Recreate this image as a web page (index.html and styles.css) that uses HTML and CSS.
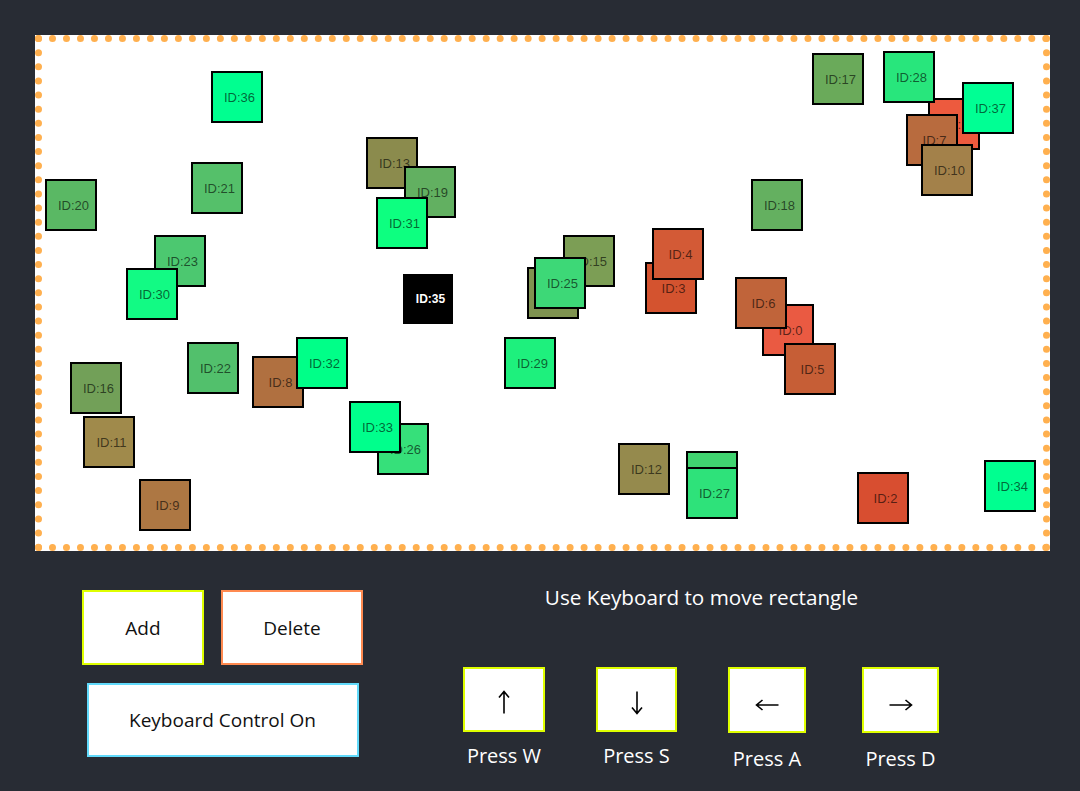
FILE: index.html
```html
<!DOCTYPE html>
<html lang="en">
<head>
<meta charset="utf-8">
<title>Rectangles</title>
<link rel="stylesheet" href="styles.css">
</head>
<body>
<div class="app">
  <div class="board">
    <div class="rect" style="left:720px;top:262px;background:#ea5a42">ID:0</div>
    <div class="rect" style="left:886px;top:56px;background:#ed5a3e">ID:1</div>
    <div class="rect" style="left:815px;top:430px;background:#d84e30">ID:2</div>
    <div class="rect" style="left:603px;top:220px;background:#d4532f">ID:3</div>
    <div class="rect" style="left:610px;top:186px;background:#d35a36">ID:4</div>
    <div class="rect" style="left:742px;top:301px;background:#c65e36">ID:5</div>
    <div class="rect" style="left:693px;top:235px;background:#c0643a">ID:6</div>
    <div class="rect" style="left:864px;top:72px;background:#b86b3e">ID:7</div>
    <div class="rect" style="left:210px;top:314px;background:#b07040">ID:8</div>
    <div class="rect" style="left:97px;top:437px;background:#ad7743">ID:9</div>
    <div class="rect" style="left:879px;top:102px;background:#a3814a">ID:10</div>
    <div class="rect" style="left:41px;top:374px;background:#a08a4b">ID:11</div>
    <div class="rect" style="left:576px;top:401px;background:#958a4d">ID:12</div>
    <div class="rect" style="left:324px;top:95px;background:#8b8b4d">ID:13</div>
    <div class="rect" style="left:485px;top:225px;background:#7f9350">ID:14</div>
    <div class="rect" style="left:521px;top:193px;background:#7c9e55">ID:15</div>
    <div class="rect" style="left:28px;top:320px;background:#72a058">ID:16</div>
    <div class="rect" style="left:770px;top:11px;background:#6aaa5a">ID:17</div>
    <div class="rect" style="left:709px;top:137px;background:#64b060">ID:18</div>
    <div class="rect" style="left:362px;top:124px;background:#62b061">ID:19</div>
    <div class="rect" style="left:3px;top:137px;background:#5ab864">ID:20</div>
    <div class="rect" style="left:149px;top:120px;background:#55c06a">ID:21</div>
    <div class="rect" style="left:145px;top:300px;background:#52c06c">ID:22</div>
    <div class="rect" style="left:112px;top:193px;background:#4cc870">ID:23</div>
    <div class="rect" style="left:644px;top:409px;background:#40d470">ID:24</div>
    <div class="rect" style="left:492px;top:215px;background:#3dd877">ID:25</div>
    <div class="rect" style="left:335px;top:381px;background:#36e07a">ID:26</div>
    <div class="rect" style="left:644px;top:425px;background:#2ee27a">ID:27</div>
    <div class="rect" style="left:841px;top:9px;background:#28e67c">ID:28</div>
    <div class="rect" style="left:462px;top:295px;background:#1ef07d">ID:29</div>
    <div class="rect" style="left:84px;top:226px;background:#12fa84">ID:30</div>
    <div class="rect" style="left:334px;top:155px;background:#0dff80">ID:31</div>
    <div class="rect" style="left:254px;top:295px;background:#00ff88">ID:32</div>
    <div class="rect" style="left:307px;top:359px;background:#00ff8c">ID:33</div>
    <div class="rect" style="left:942px;top:418px;background:#00ff90">ID:34</div>
    <div class="rect rect--selected" style="left:361px;top:232px">ID:35</div>
    <div class="rect" style="left:169px;top:29px;background:#00ff90">ID:36</div>
    <div class="rect" style="left:920px;top:40px;background:#00ff94">ID:37</div>
  </div>

  <div class="controls">
    <div class="actions">
      <div class="action-row">
        <button class="btn btn-add">Add</button>
        <button class="btn btn-delete">Delete</button>
      </div>
      <button class="btn btn-toggle">Keyboard Control On</button>
    </div>

    <div class="keyboard">
      <p class="hint">Use Keyboard to move rectangle</p>
      <div class="keys">
        <div class="key">
          <button class="key-btn key-btn--w" aria-label="Up">
            <svg class="arrow-v" width="12" height="24" viewBox="0 0 12 24"><path d="M6 1.5V23.5M1 7.5L6 1.5L11 7.5" fill="none" stroke="#000" stroke-width="1.6"/></svg>
          </button>
          <span class="key-label">Press W</span>
        </div>
        <div class="key">
          <button class="key-btn key-btn--s" aria-label="Down">
            <svg class="arrow-v" width="12" height="24" viewBox="0 0 12 24"><path d="M6 0.5V22.5M1 16.5L6 22.5L11 16.5" fill="none" stroke="#000" stroke-width="1.6"/></svg>
          </button>
          <span class="key-label">Press S</span>
        </div>
        <div class="key key--h">
          <button class="key-btn key-btn--a" aria-label="Left">
            <svg class="arrow-h" width="24" height="12" viewBox="0 0 24 12"><path d="M1.5 6H23.5M7.5 1L1.5 6L7.5 11" fill="none" stroke="#000" stroke-width="1.6"/></svg>
          </button>
          <span class="key-label">Press A</span>
        </div>
        <div class="key key--h key--last">
          <button class="key-btn key-btn--d" aria-label="Right">
            <svg class="arrow-h" width="24" height="12" viewBox="0 0 24 12"><path d="M0.5 6H22.5M16.5 1L22.5 6L16.5 11" fill="none" stroke="#000" stroke-width="1.6"/></svg>
          </button>
          <span class="key-label">Press D</span>
        </div>
      </div>
    </div>
  </div>
</div>
</body>
</html>
```

FILE: styles.css
```css
* {
  box-sizing: border-box;
}

html, body {
  margin: 0;
  padding: 0;
}

body {
  background: #282c34;
  font-family: "Open Sans", "Noto Sans", sans-serif;
  color: #fff;
  width: 1080px;
  height: 791px;
  overflow: hidden;
}

.app {
  padding-top: 35px;
}

.board {
  position: relative;
  margin-left: 35px;
  width: 1015px;
  height: 516px;
  border: 7px dotted #ffb04f;
  background: #fff;
}

.rect {
  position: absolute;
  width: 52px;
  height: 52px;
  border: 2px solid #000;
  display: flex;
  align-items: center;
  justify-content: center;
  padding-left: 5px;
  font-family: "Liberation Sans", Arial, sans-serif;
  font-size: 13px;
  color: rgba(0, 0, 0, 0.62);
  white-space: nowrap;
  overflow: hidden;
}

.rect--selected {
  width: 50px;
  height: 50px;
  border: none;
  background: #000;
  color: #fff;
  font-weight: bold;
  font-size: 12px;
}

.controls {
  display: flex;
  align-items: flex-start;
  padding-top: 34px;
}

.actions {
  margin-left: 82px;
  margin-top: 5px;
  width: 281px;
  display: flex;
  flex-direction: column;
  align-items: center;
  gap: 18px;
}

.action-row {
  display: flex;
  gap: 17px;
}

.btn {
  display: flex;
  align-items: center;
  justify-content: center;
  background: #fff;
  color: #111;
  font-family: "Open Sans", "Noto Sans", sans-serif;
  font-size: 19px;
  padding: 0;
  margin: 0;
  border: 2px solid #000;
}

.btn-add {
  width: 122px;
  height: 75px;
  border-color: #dfff00;
}

.btn-delete {
  width: 142px;
  height: 75px;
  border-color: #ff8a50;
}

.btn-toggle {
  width: 272px;
  height: 74px;
  border-color: #61dafb;
}

.keyboard {
  margin-left: 100px;
  width: 477px;
  display: flex;
  flex-direction: column;
  align-items: center;
}

.hint {
  margin: 0;
  font-size: 20.7px;
  line-height: 24px;
  text-align: center;
  white-space: nowrap;
}

.keys {
  margin-top: 58px;
  width: 100%;
  display: flex;
  gap: 51px;
}

.key {
  display: flex;
  flex-direction: column;
  align-items: center;
}

.key--last {
  margin-left: 5px;
}

.key-btn {
  display: flex;
  align-items: center;
  justify-content: center;
  background: #fff;
  border: 2px solid #dfff00;
  padding: 0;
  margin: 0;
}

.key-btn--w { width: 82px; height: 65px; padding-top: 4px; }
.key-btn--s { width: 81px; height: 65px; padding-top: 6px; }
.key-btn--a { width: 78px; height: 66px; padding-top: 10px; }
.key-btn--d { width: 77px; height: 66px; padding-top: 10px; }

.key-label {
  margin-top: 12px;
  font-size: 20px;
  line-height: 24px;
  white-space: nowrap;
}

.key--h .key-label {
  margin-top: 14px;
}
```
